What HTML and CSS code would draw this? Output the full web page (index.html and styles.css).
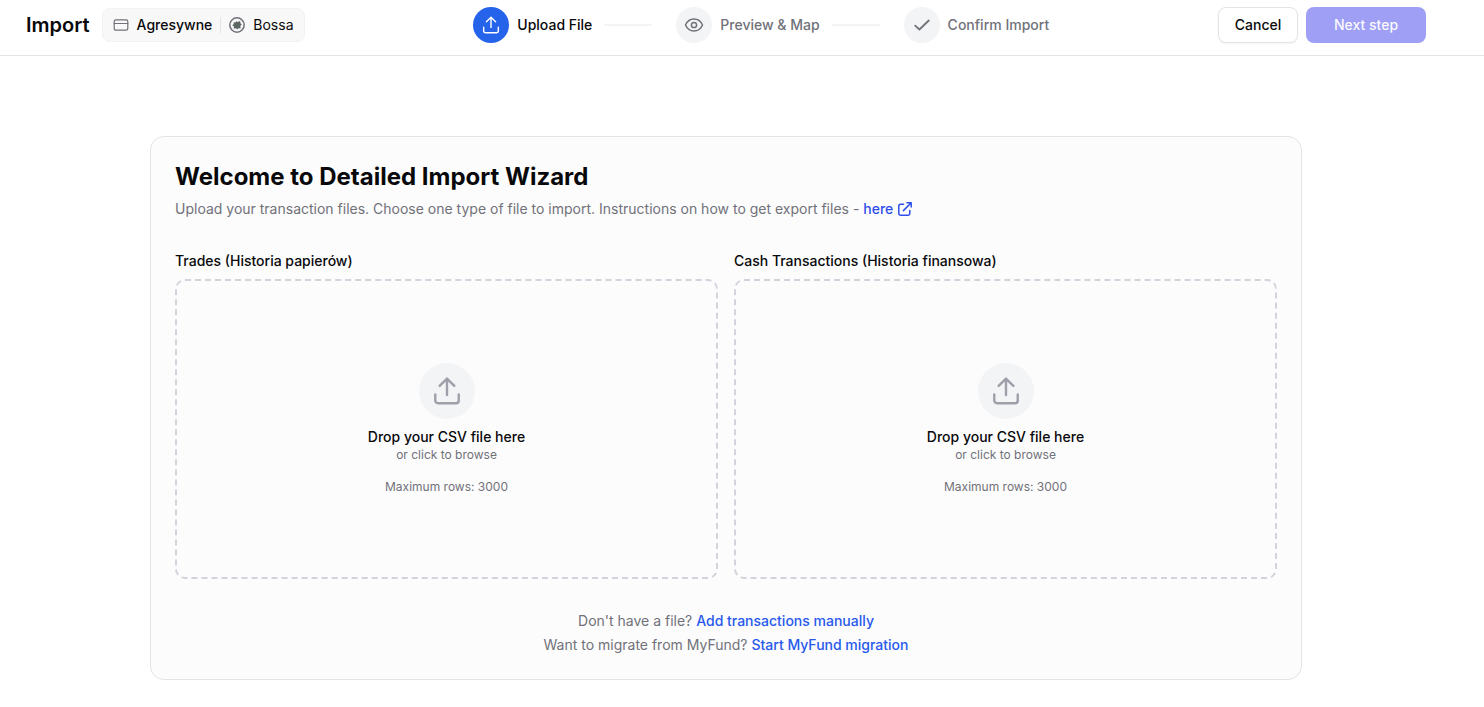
FILE: index.html
```html
<!DOCTYPE html>
<html lang="en">
<head>
    <meta charset="UTF-8">
    <meta name="viewport" content="width=device-width, initial-scale=1.0">
    <title>Import</title>
    <link rel="stylesheet" href="styles.css">
</head>
<body>
    <!-- shared upload icon -->
    <svg class="sprite" aria-hidden="true">
        <symbol id="icon-upload" viewBox="0 0 24 24">
            <path d="M12 15V3M6.500 8.200 12 2.700l5.500 5.500M3.200 14.500v4.700a2 2 0 0 0 2 2h13.600a2 2 0 0 0 2-2v-4.700"/>
        </symbol>
    </svg>

    <header class="topbar">
        <div class="topbar-left">
            <h1>Import</h1>
            <div class="source">
                <span class="source-item portfolio">
                    <svg class="icon" viewBox="0 0 16 16" width="16" height="16"><rect x="1.200" y="2.800" width="13.600" height="10.400" rx="1.600"/><path d="M1.200 6.500h13.600"/></svg>
                    Agresywne
                </span>
                <span class="source-item broker">
                    <svg class="icon" viewBox="0 0 16 16" width="16" height="16"><circle cx="8" cy="8" r="7.200"/><path class="leaf" d="M7.200 4.200 8.600 5l2.600-1 .2 2.200 1.400 1.400-1.400 1.200.2 2.600-2.200-.2L8.200 12.600 7 11.200l-2.400.2.400-2L3.200 8.200 4.800 7l-.2-1.800 1.800.2z"/></svg>
                    Bossa
                </span>
            </div>
        </div>

        <ol class="steps">
            <li class="step active">
                <span class="step-icon"><svg class="icon" width="20" height="20"><use href="#icon-upload"/></svg></span>
                Upload File
            </li>
            <li class="step">
                <span class="step-icon"><svg class="icon" viewBox="0 0 20 20" width="20" height="20"><path d="M1.500 10C3.200 6.200 6.300 4 10 4s6.800 2.200 8.500 6c-1.700 3.800-4.800 6-8.500 6s-6.800-2.200-8.500-6z"/><circle cx="10" cy="10" r="2.600"/></svg></span>
                Preview &amp; Map
            </li>
            <li class="step">
                <span class="step-icon"><svg class="icon check" viewBox="0 0 20 20" width="20" height="20"><path d="m3.200 10.600 4.200 3.900 9.400-9"/></svg></span>
                Confirm Import
            </li>
        </ol>

        <div class="actions">
            <button type="button" class="btn">Cancel</button>
            <button type="button" class="btn btn-primary" disabled>Next step</button>
        </div>
    </header>

    <main>
        <form class="card">
            <h2>Welcome to Detailed Import Wizard</h2>
            <p class="intro">Upload your transaction files. Choose one type of file to import. Instructions on how to get export files - <a href="#">here <svg class="icon" viewBox="0 0 16 16" width="16" height="16"><path d="M6.500 3.200H3.600A1.800 1.800 0 0 0 1.800 5v7.400a1.800 1.800 0 0 0 1.800 1.800H11a1.800 1.800 0 0 0 1.800-1.800V9.500M6.400 9.600l7.800-7.800M10 1.800h4.200V6"/></svg></a></p>

            <div class="uploads">
                <div class="upload">
                    <label class="upload-title" for="trades">Trades (Historia papierów)</label>
                    <label class="dropzone">
                        <input type="file" id="trades" name="trades" accept=".csv">
                        <span class="drop-icon"><svg class="icon" width="32" height="32"><use href="#icon-upload"/></svg></span>
                        <span class="drop-title">Drop your CSV file here</span>
                        <span class="drop-hint">or click to browse</span>
                        <span class="drop-limit">Maximum rows: 3000</span>
                    </label>
                </div>
                <div class="upload">
                    <label class="upload-title" for="cash">Cash Transactions (Historia finansowa)</label>
                    <label class="dropzone">
                        <input type="file" id="cash" name="cash" accept=".csv">
                        <span class="drop-icon"><svg class="icon" width="32" height="32"><use href="#icon-upload"/></svg></span>
                        <span class="drop-title">Drop your CSV file here</span>
                        <span class="drop-hint">or click to browse</span>
                        <span class="drop-limit">Maximum rows: 3000</span>
                    </label>
                </div>
            </div>

            <div class="alternatives">
                <p>Don't have a file? <a href="#">Add transactions manually</a></p>
                <p>Want to migrate from MyFund? <a href="#">Start MyFund migration</a></p>
            </div>
        </form>
    </main>
</body>
</html>
```
FILE: styles.css
```css
* {
    box-sizing: border-box;
}
body {
    margin: 0;
    font-family: Inter, sans-serif;
    font-size: 14px;
    line-height: 20px;
    color: #09090b;
    background-color: #fff;
}
h1, h2, p, ol {
    margin: 0;
    padding: 0;
}
a {
    font-weight: 500;
    color: #2f4fea;
    text-decoration: none;
}
a:hover {
    text-decoration: underline;
}
.sprite {
    display: none;
}
.icon {
    flex-shrink: 0;
    fill: none;
    stroke: currentColor;
    stroke-width: 1.5;
    stroke-linecap: round;
    stroke-linejoin: round;
}

/* Top bar */
.topbar {
    display: flex;
    justify-content: space-between;
    align-items: center;
    padding: 7px 58px 12px 26px;
    border-bottom: 1px solid #e4e4e7;
}
.topbar-left {
    display: flex;
    align-items: center;
    gap: 12px;
}
h1 {
    font-size: 20px;
    line-height: 28px;
    font-weight: 600;
}
.source {
    display: flex;
    align-items: center;
    padding: 6px 10px;
    border: 1px solid #f2f2f4;
    border-radius: 8px;
    background-color: #f8f8f9;
}
.source-item {
    display: flex;
    align-items: center;
    gap: 8px;
}
.source-item .icon {
    color: #71717a;
}
.portfolio {
    font-weight: 500;
}
.portfolio .icon {
    stroke-width: 1.2;
}
.broker {
    margin-left: 8px;
    padding-left: 8px;
    border-left: 1px solid #e4e4e7;
    line-height: 16px;
}
.leaf {
    fill: #5b6663;
    stroke: none;
}

.steps {
    display: flex;
    list-style: none;
}
.step {
    display: flex;
    align-items: center;
    gap: 8px;
    font-weight: 500;
    color: #71717a;
}
.step:not(:last-child)::after {
    content: "";
    width: 48px;
    height: 2px;
    margin: 0 24px 0 4px;
    background-color: #f3f4f6;
}
.step-icon {
    display: flex;
    align-items: center;
    justify-content: center;
    width: 36px;
    height: 36px;
    border-radius: 50%;
    background-color: #f3f4f6;
}
.step-icon .check {
    stroke-width: 1.8;
}
.active {
    color: #09090b;
}
.active .step-icon {
    color: #fff;
    background-color: #2563eb;
}
.active .icon {
    stroke-width: 1.7;
}
.actions {
    display: flex;
    gap: 8px;
}
.btn {
    height: 36px;
    width: 80px;
    padding: 0;
    border: 1px solid #e4e4e7;
    border-radius: 8px;
    font: inherit;
    font-weight: 500;
    color: #09090b;
    background-color: #fff;
    box-shadow: 0 1px 2px rgba(0, 0, 0, 0.05);
    cursor: pointer;
}
.btn-primary {
    width: 120px;
    border: none;
    color: #fafafe;
    background-color: #9e9ff5;
    box-shadow: none;
}

/* Import card */
main {
    padding: 80px 32px 24px 0;
}
.card {
    max-width: 1152px;
    margin: 0 auto;
    padding: 24px;
    border: 1px solid #e4e4e7;
    border-radius: 14px;
    background-color: #fcfcfc;
}
h2 {
    margin-bottom: 6px;
    font-size: 24px;
    line-height: 32px;
    font-weight: 700;
}
.intro {
    margin-bottom: 32px;
    color: #71717a;
}
.intro a {
    display: inline-flex;
    align-items: center;
    gap: 4px;
    vertical-align: top;
}
.uploads {
    display: grid;
    grid-template-columns: 1fr 1fr;
    gap: 16px;
}
.upload-title {
    display: block;
    margin-bottom: 8px;
    font-weight: 500;
}
.dropzone {
    display: flex;
    flex-direction: column;
    align-items: center;
    justify-content: center;
    min-height: 300px;
    border: 2px dashed #d2d3dc;
    border-radius: 10px;
    text-align: center;
    cursor: pointer;
}
.dropzone:hover {
    border-color: #9ca3af;
}
.dropzone input {
    position: absolute;
    width: 1px;
    height: 1px;
    opacity: 0;
}
.drop-icon {
    display: flex;
    align-items: center;
    justify-content: center;
    width: 56px;
    height: 56px;
    margin-bottom: 8px;
    border-radius: 50%;
    color: #9f9fa9;
    background-color: #f3f4f6;
}
.drop-icon .icon {
    stroke-width: 1.8;
}
.drop-title {
    font-weight: 500;
}
.drop-hint, .drop-limit {
    font-size: 12px;
    line-height: 16px;
    color: #71717a;
}
.drop-limit {
    margin-top: 16px;
}
.alternatives {
    display: flex;
    flex-direction: column;
    gap: 4px;
    margin-top: 32px;
    text-align: center;
    color: #71717a;
}
.alternatives a {
    color: #2859ec;
}
```
